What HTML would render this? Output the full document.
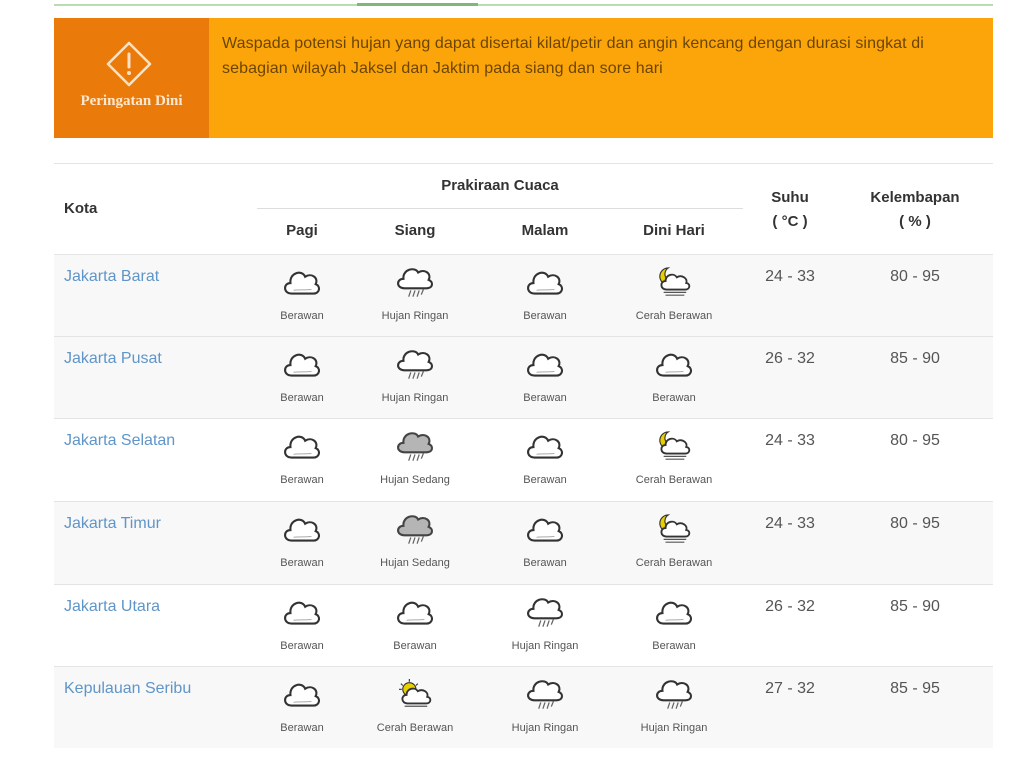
<!DOCTYPE html>
<html><head><meta charset="utf-8">
<style>
*{margin:0;padding:0;box-sizing:border-box}
body{width:1024px;height:768px;background:#fff;position:relative;overflow:hidden;font-family:"Liberation Sans",sans-serif;color:#333}
.a{position:absolute}
.row{position:absolute;left:54px;width:939px;border-top:1px solid #e4e4e4}
.city{position:absolute;left:10px;top:13px;font-size:16px;color:#5f95c8}
.num{position:absolute;top:13px;font-size:16px;color:#555;width:120px;text-align:center}
.cell{position:absolute;top:11px;width:120px;text-align:center}
.cell svg{display:block;margin:0 auto}
.lbl{font-size:11px;color:#555;margin-top:12px;white-space:nowrap}
.h{position:absolute;font-weight:bold;font-size:15px;color:#333;text-align:center}
</style></head><body>
<svg width="0" height="0" style="position:absolute">
<defs>
<symbol id="cl" viewBox="0 0 40 30"><path d="M10 26 C2 26 2 16 9 16 C8 6 20 3 23 10 C29 6 36 11 33 17 C38 19 37 26 31 26 Z" fill="#fff" stroke="#333" stroke-width="2"/><path d="M12 23 C16 22 22 23 29 22" stroke="#aaa" fill="none"/></symbol>
<symbol id="rn" viewBox="0 0 40 30"><path d="M10 21 C2 21 2 12 9 12 C8 3 20 0 23 6 C29 2 36 7 33 13 C38 15 37 21 31 21 Z" fill="#fff" stroke="#333" stroke-width="2"/><path d="M16 23 l-2 6 M20 23 l-2 6 M24 23 l-2 6 M28 22 l-2 5" stroke="#666" stroke-width="1.2"/></symbol>
<symbol id="rs" viewBox="0 0 40 30"><path d="M10 21 C2 21 2 12 9 12 C8 3 20 0 23 6 C29 2 36 7 33 13 C38 15 37 21 31 21 Z" fill="#b5b5b5" stroke="#444" stroke-width="2"/><path d="M16 23 l-2 6 M20 23 l-2 6 M24 23 l-2 6 M28 22 l-2 5" stroke="#666" stroke-width="1.2"/></symbol>
<symbol id="mn" viewBox="0 0 40 34"><path d="M14 2 A9 9 0 1 0 22 15 A7 7 0 1 1 14 2Z" fill="#e8d000" stroke="#333" stroke-width="1.2"/><path d="M12 25 C5 25 5 16 11 16 C11 9 20 7 23 12 C28 9 35 13 33 18 C38 19 37 25 32 25 Z" fill="#fff" stroke="#333" stroke-width="2"/><path d="M9 28 H33 M11 31 H31" stroke="#555" stroke-width="1.3"/></symbol>
<symbol id="sn" viewBox="0 0 40 34"><circle cx="14" cy="12" r="7" fill="#e8d000" stroke="#333" stroke-width="1.2"/><path d="M14 1 v3 M5 6 l2 2 M23 6 l-2 2 M3 12 h3" stroke="#333" stroke-width="1.2"/><path d="M12 27 C5 27 5 18 11 18 C11 11 20 9 23 14 C28 11 35 15 33 20 C38 21 37 27 32 27 Z" fill="#fff" stroke="#333" stroke-width="2"/><path d="M9 30 H33" stroke="#555" stroke-width="1.3"/></symbol>
</defs></svg>

<div class="a" style="left:54px;top:4px;width:939px;height:2px;background:#b9dcb3"></div>
<div class="a" style="left:357px;top:3px;width:121px;height:3px;background:#7cb87a"></div>

<div class="a" style="left:54px;top:18px;width:155px;height:120px;background:#ea7b0b"></div>
<svg class="a" style="left:105px;top:40px" width="48" height="48" viewBox="0 0 48 48"><path d="M24 3 L45 24 L24 45 L3 24 Z" fill="none" stroke="#fbe2c4" stroke-width="2.5" stroke-linejoin="round"/><path d="M24 14 V27" stroke="#fbe2c4" stroke-width="3" stroke-linecap="round"/><circle cx="24" cy="33" r="2" fill="#fbe2c4"/></svg>
<div class="a" style="left:54px;top:93px;width:155px;text-align:center;font-family:'Liberation Serif',serif;font-weight:bold;font-size:15px;color:#fde8cf">Peringatan Dini</div>
<div class="a" style="left:209px;top:18px;width:784px;height:120px;background:#fca50a"></div>
<div class="a" style="left:222px;top:31px;width:770px;font-size:16px;line-height:25px;color:#6b4500;letter-spacing:0.1px;white-space:nowrap">Waspada potensi hujan yang dapat disertai kilat/petir dan angin kencang dengan durasi singkat di<br>sebagian wilayah Jaksel dan Jaktim pada siang dan sore hari</div>

<div class="a" style="left:54px;top:163px;width:939px;height:1px;background:#e4e4e4"></div>
<div class="h" style="left:64px;top:200px;text-align:left">Kota</div>
<div class="h" style="left:380px;top:177px;width:240px">Prakiraan Cuaca</div>
<div class="a" style="left:257px;top:208px;width:486px;height:1px;background:#ddd"></div>
<div class="h" style="left:242px;top:222px;width:120px">Pagi</div>
<div class="h" style="left:355px;top:222px;width:120px">Siang</div>
<div class="h" style="left:485px;top:222px;width:120px">Malam</div>
<div class="h" style="left:614px;top:222px;width:120px">Dini Hari</div>
<div class="h" style="left:730px;top:186px;width:120px;line-height:24px">Suhu<br>( °C )</div>
<div class="h" style="left:855px;top:186px;width:120px;line-height:24px">Kelembapan<br>( % )</div>

<div class="row" style="top:254px;height:82px;background:#f8f8f8">
<div class="city">Jakarta Barat</div>
<div class="cell" style="left:188px"><svg width="42" height="32"><use href="#cl"/></svg><div class="lbl">Berawan</div></div>
<div class="cell" style="left:301px"><svg width="42" height="32"><use href="#rn"/></svg><div class="lbl">Hujan Ringan</div></div>
<div class="cell" style="left:431px"><svg width="42" height="32"><use href="#cl"/></svg><div class="lbl">Berawan</div></div>
<div class="cell" style="left:560px"><svg width="42" height="32"><use href="#mn"/></svg><div class="lbl">Cerah Berawan</div></div>
<div class="num" style="left:676px">24 - 33</div><div class="num" style="left:801px">80 - 95</div>
</div>
<div class="row" style="top:336px;height:82px;background:#f8f8f8">
<div class="city">Jakarta Pusat</div>
<div class="cell" style="left:188px"><svg width="42" height="32"><use href="#cl"/></svg><div class="lbl">Berawan</div></div>
<div class="cell" style="left:301px"><svg width="42" height="32"><use href="#rn"/></svg><div class="lbl">Hujan Ringan</div></div>
<div class="cell" style="left:431px"><svg width="42" height="32"><use href="#cl"/></svg><div class="lbl">Berawan</div></div>
<div class="cell" style="left:560px"><svg width="42" height="32"><use href="#cl"/></svg><div class="lbl">Berawan</div></div>
<div class="num" style="left:676px">26 - 32</div><div class="num" style="left:801px">85 - 90</div>
</div>
<div class="row" style="top:418px;height:83px;background:#fff">
<div class="city">Jakarta Selatan</div>
<div class="cell" style="left:188px"><svg width="42" height="32"><use href="#cl"/></svg><div class="lbl">Berawan</div></div>
<div class="cell" style="left:301px"><svg width="42" height="32"><use href="#rs"/></svg><div class="lbl">Hujan Sedang</div></div>
<div class="cell" style="left:431px"><svg width="42" height="32"><use href="#cl"/></svg><div class="lbl">Berawan</div></div>
<div class="cell" style="left:560px"><svg width="42" height="32"><use href="#mn"/></svg><div class="lbl">Cerah Berawan</div></div>
<div class="num" style="left:676px">24 - 33</div><div class="num" style="left:801px">80 - 95</div>
</div>
<div class="row" style="top:501px;height:83px;background:#f8f8f8">
<div class="city">Jakarta Timur</div>
<div class="cell" style="left:188px"><svg width="42" height="32"><use href="#cl"/></svg><div class="lbl">Berawan</div></div>
<div class="cell" style="left:301px"><svg width="42" height="32"><use href="#rs"/></svg><div class="lbl">Hujan Sedang</div></div>
<div class="cell" style="left:431px"><svg width="42" height="32"><use href="#cl"/></svg><div class="lbl">Berawan</div></div>
<div class="cell" style="left:560px"><svg width="42" height="32"><use href="#mn"/></svg><div class="lbl">Cerah Berawan</div></div>
<div class="num" style="left:676px">24 - 33</div><div class="num" style="left:801px">80 - 95</div>
</div>
<div class="row" style="top:584px;height:82px;background:#fff">
<div class="city">Jakarta Utara</div>
<div class="cell" style="left:188px"><svg width="42" height="32"><use href="#cl"/></svg><div class="lbl">Berawan</div></div>
<div class="cell" style="left:301px"><svg width="42" height="32"><use href="#cl"/></svg><div class="lbl">Berawan</div></div>
<div class="cell" style="left:431px"><svg width="42" height="32"><use href="#rn"/></svg><div class="lbl">Hujan Ringan</div></div>
<div class="cell" style="left:560px"><svg width="42" height="32"><use href="#cl"/></svg><div class="lbl">Berawan</div></div>
<div class="num" style="left:676px">26 - 32</div><div class="num" style="left:801px">85 - 90</div>
</div>
<div class="row" style="top:666px;height:82px;background:#f8f8f8">
<div class="city">Kepulauan Seribu</div>
<div class="cell" style="left:188px"><svg width="42" height="32"><use href="#cl"/></svg><div class="lbl">Berawan</div></div>
<div class="cell" style="left:301px"><svg width="42" height="32"><use href="#sn"/></svg><div class="lbl">Cerah Berawan</div></div>
<div class="cell" style="left:431px"><svg width="42" height="32"><use href="#rn"/></svg><div class="lbl">Hujan Ringan</div></div>
<div class="cell" style="left:560px"><svg width="42" height="32"><use href="#rn"/></svg><div class="lbl">Hujan Ringan</div></div>
<div class="num" style="left:676px">27 - 32</div><div class="num" style="left:801px">85 - 95</div>
</div>
</body></html>
